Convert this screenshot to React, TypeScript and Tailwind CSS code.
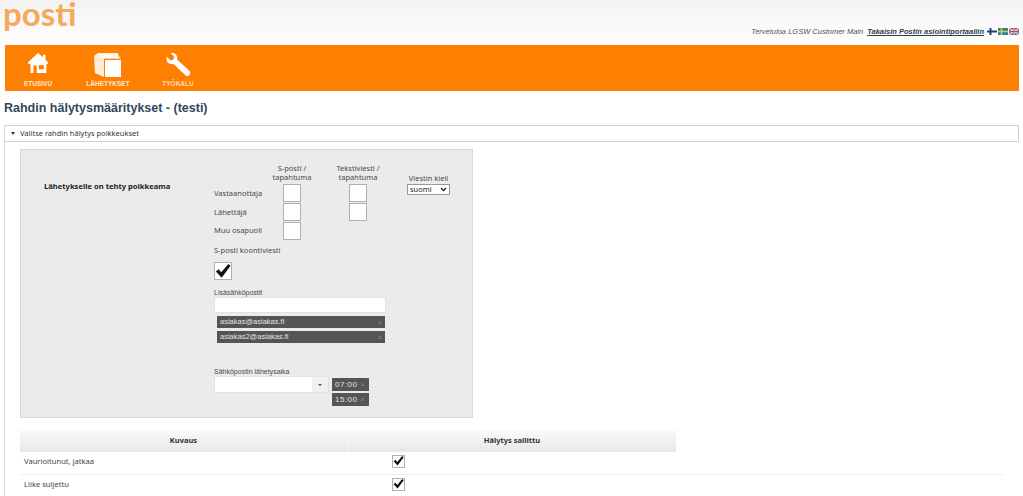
const font = "font-['Noto_Sans','DejaVu_Sans',sans-serif]";

const HouseIcon = () => (
  <svg width="20" height="20" viewBox="0 0 24 24" fill="#fff">
    <path d="M12 0 L18 5 V2 H21 V8 L24 11 V13 H22 V24 H10.5 V15 H6.5 V24 H3 V13 H0 V11 Z" />
    <rect x="13" y="14.5" width="6" height="5" fill="#ff8000" />
  </svg>
);

const BoxIcon = () => (
  <svg width="28" height="24" viewBox="0 0 28 24">
    <path d="M0 3 L4 0 H24 V5 H10 V24 L1 20 Z" fill="#fff" opacity="0.85" />
    <path d="M4 1 H24 L27 6 H9 Z" fill="#fff" opacity="0.65" />
    <rect x="11" y="7" width="16" height="17" fill="#fff" />
  </svg>
);

const WrenchIcon = () => (
  <svg width="28" height="24" viewBox="0 0 28 26" fill="#fff">
    <path d="M2 4 L6 8 L9 7 L10 4 L6 0 C10 -1 14 2 13 7 L27 20 C28 22 26 26 23 25 L9 12 C4 13 0 9 2 4 Z" />
  </svg>
);

const Check = ({ size = 18 }: { size?: number }) => (
  <svg width={size} height={size} viewBox="0 0 18 18" className="block">
    <path d="M1 9.5 L4 7 L7 10.5 L15 1 L17.5 3 L7.5 16.5 Z" fill="#111" />
  </svg>
);

const Box = ({ checked, small }: { checked?: boolean; small?: boolean }) => (
  <div className={`${small ? 'w-[13px] h-[13px]' : 'w-[18px] h-[18px]'} border border-[#b0b0b0] bg-white box-border overflow-hidden flex items-center justify-center`}>
    {checked && <Check size={small ? 12 : 16} />}
  </div>
);

const Tag = ({ text, wide }: { text: string; wide?: boolean }) => (
  <div className={`${wide ? 'w-[168px] h-[12px] pl-[3px] pr-[3px] text-[7.5px]' : 'w-[37px] h-[13px] pl-[3px] pr-[4px] text-[8px] tracking-[0.5px]'} bg-[#555555] text-[#e4e4e4] flex items-center justify-between font-['Liberation_Sans',sans-serif]`}>
    <span>{text}</span>
    <span className="text-[#8d8d8d] text-[7px] leading-none">×</span>
  </div>
);

const Flag = ({ children }: { children: React.ReactNode }) => (
  <svg width="10" height="7" viewBox="0 0 10 7" className="block -mt-[2px]">
    {children}
  </svg>
);

const Row = ({ label }: { label: string }) => (
  <div className="flex h-[23px] pb-[4px] border-b border-[#f0f0f0] items-center">
    <div className="w-[328px] pl-[4px] pt-[2px] text-[7.6px] text-[#444]">{label}</div>
    <div className="pl-[44px]"><Box checked small /></div>
  </div>
);

export default function App() {
  return (
    <div className={`${font} w-[1023px] h-[496px] overflow-hidden bg-white text-[#333]`}>
      <header className="h-[45px] bg-gradient-to-b from-[#f2f2f2] to-white flex justify-between overflow-hidden">
        <div className="pl-[3px] -mt-[6px] font-['Lato',sans-serif] text-[33px] leading-[38px] font-bold text-[#f5a95a]">posti</div>
        <div className="flex items-center gap-[1px] pr-[4px] pt-[20px] h-[44px] font-['Liberation_Sans',sans-serif] text-[7.5px] italic text-[#555]">
          <span className="mr-[3px]">Tervetuloa LGSW Customer Main</span>
          <span className="font-bold underline text-[#2f3f4f] mr-[2px]">Takaisin Postin asiointiportaaliin</span>
          <Flag>
            <rect width="10" height="7" fill="#fff" />
            <path d="M0 3.5 H10 M3.5 0 V7" stroke="#1b3f7a" strokeWidth="2" />
          </Flag>
          <Flag>
            <rect width="10" height="7" fill="#2f7fa8" />
            <path d="M0 3.5 H10 M3.5 0 V7" stroke="#d8cf3a" strokeWidth="1.6" />
          </Flag>
          <Flag>
            <rect width="10" height="7" fill="#46508a" />
            <path d="M0 0 L10 7 M10 0 L0 7" stroke="#e8e0e0" strokeWidth="1.2" />
            <path d="M0 3.5 H10 M5 0 V7" stroke="#e8e0e0" strokeWidth="2.2" />
            <path d="M0 3.5 H10 M5 0 V7" stroke="#c8434f" strokeWidth="1.1" />
          </Flag>
        </div>
      </header>

      <nav className="ml-[5px] mr-[4px] h-[46px] bg-[#ff8000] flex text-white font-['Liberation_Sans',sans-serif] text-[6.5px] leading-[6px] font-bold">
        <div className="w-[66px] flex flex-col items-center pt-[8px]"><div className="h-[24px]"><HouseIcon /></div><span className="mt-[4px] text-[#ffe8cf]">ETUSIVU</span></div>
        <div className="w-[74px] flex flex-col items-center pt-[8px]"><div className="h-[24px]"><BoxIcon /></div><span className="mt-[4px] text-[#ffe8cf]">LÄHETYKSET</span></div>
        <div className="w-[66px] flex flex-col items-center pt-[8px] text-[#ffd9ae]"><div className="h-[24px]"><WrenchIcon /></div><span className="mt-[4px]">TYÖKALU</span></div>
      </nav>

      <h1 className="pl-[4px] mt-[9px] h-[25px] font-['Liberation_Sans',sans-serif] text-[12.5px] leading-[17px] font-bold text-[#33475b]">Rahdin hälytysmääritykset - (testi)</h1>

      <section className="ml-[4px] mr-[4px] border-l border-[#d8d8d8] h-[372px]">
        <div className="h-[17px] border-t border-b border-r border-[#cfcfcf] flex items-center pl-[6px] gap-[5px] text-[7.5px]">
          <span className="w-0 h-0 border-l-[2.5px] border-r-[2.5px] border-t-[3px] border-l-transparent border-r-transparent border-t-[#333]" />
          <span>Valitse rahdin hälytys poikkeukset</span>
        </div>

        <div className="pl-[15px] pt-[7px]">
          <div className="w-[453px] h-[269px] bg-[#ebebeb] border border-[#d8d8d8] flex box-border text-[7.5px] text-[#4a4a4a]">
            <div className="w-[193px] pl-[23px] pt-[31px] font-bold text-[7.6px] text-[#222] leading-[10px]">Lähetykselle on tehty poikkeama</div>
            <div className="flex flex-col">
              <div className="flex">
                <div className="grid grid-cols-[69px_18px_48px_18px] gap-y-[1px] pt-[14px] items-center">
                  <div />
                  <div className="text-center leading-[9px] h-[19px] whitespace-nowrap -mx-[15px]">S-posti /<br />tapahtuma</div>
                  <div />
                  <div className="text-center leading-[9px] h-[19px] whitespace-nowrap -mx-[15px]">Tekstiviesti /<br />tapahtuma</div>
                  <div className="pt-[2px]">Vastaanottaja</div><Box /><div /><Box />
                  <div className="pt-[2px]">Lähettäjä</div><Box /><div /><Box />
                  <div>Muu osapuoli</div><Box /><div /><div />
                </div>
                <div className="ml-[40px] pt-[24px] w-[43px] text-center leading-[9px]">
                  <div>Viestin kieli</div>
                  <div className="mt-[1px] h-[11px] border border-[#999] bg-white flex items-center justify-between px-[2px] text-[#222]">
                    <span>suomi</span>
                    <svg width="7" height="5" viewBox="0 0 7 5" fill="none"><path d="M1 1 L3.5 3.5 L6 1" stroke="#222" strokeWidth="1.3" /></svg>
                  </div>
                </div>
              </div>
              <div className="mt-[5px] leading-[10px]">S-posti koontiviesti</div>
              <div className="mt-[7px]"><Box checked /></div>
              <div className="mt-[9px] leading-[8px] text-[7px] font-['Liberation_Sans',sans-serif]">Lisäsähköpostit</div>
              <div className="w-[172px] h-[16px] bg-white border border-[#e2e2e2]" />
              <div className="mt-[3px] ml-[3px] flex flex-col gap-[3px]">
                <Tag text="asiakas@asiakas.fi" wide />
                <Tag text="asiakas2@asiakas.fi" wide />
              </div>
              <div className="mt-[25px] leading-[8px] text-[7px] font-['Liberation_Sans',sans-serif]">Sähköpostin lähetysaika</div>
              <div className="flex">
                <div className="w-[115px] h-[17px] bg-white border border-[#e2e2e2] flex justify-end">
                  <div className="w-[16px] bg-[#f0f0f0] flex items-center justify-center">
                    <span className="w-0 h-0 border-l-[2px] border-r-[2px] border-t-[2px] border-l-transparent border-r-transparent border-t-[#555]" />
                  </div>
                </div>
                <div className="ml-[3px] pt-[2px] flex flex-col gap-[2px]">
                  <Tag text="07:00" />
                  <Tag text="15:00" />
                </div>
              </div>
            </div>
          </div>

          <div className="w-[656px] mt-[12px] flex h-[22px] bg-gradient-to-b from-[#fafafa] to-[#e8e8e8] text-[7.5px] font-bold text-[#333] items-center text-center">
            <div className="w-[328px] border-r border-[#f5f5f5] h-full flex items-center justify-center">Kuvaus</div>
            <div className="flex-1">Hälytys sallittu</div>
          </div>
          <div className="w-[984px]">
            <Row label="Vaurioitunut, jatkaa" />
            <Row label="Liike suljettu" />
          </div>
        </div>
      </section>
    </div>
  );
}
